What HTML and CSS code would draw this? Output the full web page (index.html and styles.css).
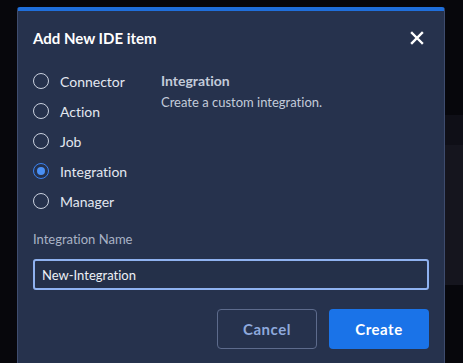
FILE: index.html
```html
<!DOCTYPE html>
<html lang="en">
<head>
    <meta charset="UTF-8">
    <meta name="viewport" content="width=device-width, initial-scale=1.0">
    <title>Add New IDE item</title>
    <link rel="stylesheet" href="styles.css">
</head>
<body>
    <div class="app">
        <div class="workspace"></div>
        <div class="side">
            <div class="side-head"></div>
            <div class="side-panel"></div>
            <div class="side-foot">Se</div>
        </div>
    </div>

    <div class="modal">
        <div class="modal-header">
            <h2>Add New IDE item</h2>
            <button class="close" aria-label="Close">
                <svg width="14" height="14" viewBox="0 0 14 14">
                    <path d="M2 2 L12 12 M12 2 L2 12" stroke="#ffffff" stroke-width="2.4" stroke-linecap="square"/>
                </svg>
            </button>
        </div>
        <div class="modal-body">
            <div class="types">
                <label class="radio"><span class="dot"></span>Connector</label>
                <label class="radio"><span class="dot"></span>Action</label>
                <label class="radio"><span class="dot"></span>Job</label>
                <label class="radio"><span class="dot checked"></span>Integration</label>
                <label class="radio"><span class="dot"></span>Manager</label>
            </div>
            <div class="info">
                <div class="info-title">Integration</div>
                <div class="info-text">Create a custom integration.</div>
            </div>
        </div>
        <div class="field">
            <div class="field-label">Integration Name</div>
            <input class="field-input" type="text" value="New-Integration">
        </div>
        <div class="actions">
            <button class="btn btn-cancel">Cancel</button>
            <button class="btn btn-create">Create</button>
        </div>
    </div>
</body>
</html>
```

FILE: styles.css
```css
body {
    margin: 0;
    height: 363px;
    overflow: hidden;
    background-color: #07070c;
    font-family: Lato, "Open Sans", sans-serif;
    font-variant-ligatures: none;
}
.app {
    display: flex;
    height: 100%;
}
.workspace {
    flex: 1;
}
.side {
    width: 240px;
    display: flex;
    flex-direction: column;
}
.side-head {
    height: 115px;
}
.side-panel {
    height: 170px;
    background-color: #15151e;
    border-top: 30px solid #0f0f17;
    box-sizing: border-box;
}
.side-foot {
    padding: 45px 0 0 0;
    color: #777b88;
    font-size: 14px;
}
.modal {
    position: absolute;
    top: 7px;
    left: 17px;
    width: 428px;
    height: 356px;
    overflow: hidden;
    background-color: #26324d;
    border: 1px solid #3e4c6e;
    border-bottom: none;
    border-top: 4px solid #1f6fdc;
    border-radius: 3px 3px 0 0;
    padding: 0 15px;
    box-sizing: border-box;
    color: #e6eaf2;
}
.modal-header {
    display: flex;
    justify-content: space-between;
    align-items: center;
    height: 54px;
}
.modal-header h2 {
    margin: 0;
    font-size: 15px;
    font-weight: 700;
    color: #ffffff;
}
.close {
    background: none;
    border: none;
    padding: 0;
    margin-right: 5px;
    width: 14px;
    height: 14px;
    cursor: pointer;
}
.modal-body {
    display: flex;
    margin-top: 1px;
}
.types {
    width: 128px;
    display: flex;
    flex-direction: column;
}
.radio {
    display: flex;
    align-items: center;
    height: 30px;
    font-size: 14px;
    color: #e2e7f0;
}
.dot {
    width: 16px;
    height: 16px;
    box-sizing: border-box;
    border: 1.5px solid #c9d0de;
    border-radius: 50%;
    margin-right: 11px;
    position: relative;
}
.dot.checked {
    border-color: #3b82f0;
}
.dot.checked::after {
    content: "";
    position: absolute;
    top: 2.5px;
    left: 2.5px;
    width: 8px;
    height: 8px;
    border-radius: 50%;
    background-color: #4a90f5;
}
.info {
    padding-top: 6px;
}
.info-title {
    font-size: 14px;
    font-weight: 700;
    color: #c3cbda;
}
.info-text {
    margin-top: 5px;
    font-size: 13px;
    color: #c3cbda;
}
.field {
    margin-top: 15px;
}
.field-label {
    font-size: 13px;
    color: #a9b3c6;
}
.field-input {
    display: block;
    width: 100%;
    height: 31px;
    margin-top: 12px;
    box-sizing: border-box;
    background-color: #243049;
    border: 2px solid #8fb2f0;
    border-radius: 3px;
    padding: 0 7px;
    font-family: Lato, sans-serif;
    font-variant-ligatures: none;
    font-size: 13px;
    color: #eef1f6;
    outline: none;
}
.actions {
    display: flex;
    justify-content: flex-end;
    gap: 12px;
    margin-top: 19px;
}
.btn {
    width: 100px;
    height: 40px;
    border-radius: 4px;
    font-family: Lato, sans-serif;
    font-variant-ligatures: none;
    font-size: 15px;
    font-weight: 700;
    letter-spacing: 0.5px;
    cursor: pointer;
}
.btn-cancel {
    background: none;
    border: 1px solid #5d6b8c;
    color: #8ea9dc;
}
.btn-create {
    background-color: #1a73e8;
    border: none;
    color: #ffffff;
}
```
